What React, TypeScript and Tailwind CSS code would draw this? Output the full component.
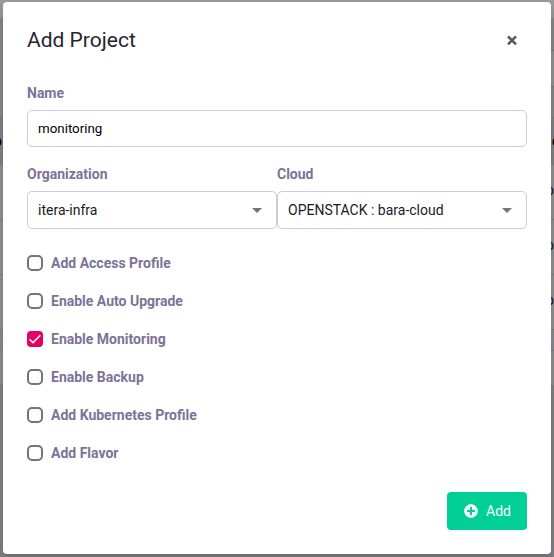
import React from "react";
import { FaPlusCircle } from "react-icons/fa";

const options = [
  { label: "Add Access Profile", checked: false },
  { label: "Enable Auto Upgrade", checked: false },
  { label: "Enable Monitoring", checked: true },
  { label: "Enable Backup", checked: false },
  { label: "Add Kubernetes Profile", checked: false },
  { label: "Add Flavor", checked: false },
];

const tableRows = ["h-[55px]", "h-[55px]", "h-[55px]"];

function Backdrop() {
  return (
    <div className="flex h-full flex-col overflow-hidden bg-[#858488] text-[14px]">
      <div className="h-[19px] shrink-0 border-b border-[#86868c] bg-[#9b9b9b]" />
      <div className="flex h-[99px] shrink-0 justify-between border-b border-[#7d7d83]">
        <div className="w-1 bg-[#88888c]" />
        <div className="w-1">
          <div className="h-8 border-b border-[#77777c] bg-[#88888c]" />
          <div className="h-9 border-b border-[#77777c] bg-[#929292]" />
          <div className="h-[30px] bg-[#88888c]" />
        </div>
      </div>
      <div className="flex h-[47px] shrink-0 items-center justify-between bg-[#828286] font-bold text-[#0c0a16]">
        <span className="-ml-[6px]">o</span>
        <span className="-mr-[6px]">o</span>
      </div>
      {tableRows.map((height, i) => (
        <div key={i} className={`${height} flex shrink-0 items-center justify-end border-b border-[#7e7e80] bg-[#919191] pb-[3px] text-[#17141f]`}>
          <span>o</span>
        </div>
      ))}
      <div className="h-[21px] shrink-0 border-b border-[#7d7d80] bg-[#8b8b91]" />
      <div className="h-[34px] shrink-0 bg-[#8f8f8f]" />
      <div className="flex-1 bg-[#828286]" />
    </div>
  );
}

function Select({ label, value }: { label: string; value: string }) {
  return (
    <div className="flex-1">
      <div className="text-[14px] leading-[22px] font-bold text-[#7b7398]">{label}</div>
      <div className="mt-[6px] flex h-[38px] items-center justify-between rounded-[5px] border border-[#cdcada] pr-[14px] pl-[10px] text-[14px] text-[#1c1a20]">
        <span>{value}</span>
        <svg width="10" height="5" viewBox="0 0 10 5" fill="#757575">
          <path d="M0 0H10L5 5Z" />
        </svg>
      </div>
    </div>
  );
}

function Checkbox({ checked }: { checked: boolean }) {
  return checked ? (
    <span className="flex size-4 items-center justify-center rounded-[4px] bg-[#e60063]">
      <svg width="16" height="16" viewBox="0 0 16 16" fill="none" stroke="white" strokeWidth="1.5">
        <path d="M2.5 8.3L6 11.6L13.4 4.2" />
      </svg>
    </span>
  ) : (
    <span className="size-4 rounded-[5px] border-2 border-[#757575]" />
  );
}

export default function App() {
  return (
    <div className="relative h-[557px] w-[554px] overflow-hidden font-['Roboto',sans-serif]">
      <Backdrop />
      <div className="absolute top-[2px] left-[3px] flex h-[552px] w-[548px] flex-col rounded-[4px] bg-white px-6 pb-6 shadow-[0_4px_10px_rgba(0,0,0,0.2)]">
        <header className="flex h-[76px] items-center justify-between pr-[9px]">
          <h1 className="text-[21px] leading-[28px] text-[#28242e]">Add Project</h1>
          <svg width="12" height="12" viewBox="0 0 12 12" stroke="#5c5a58" strokeWidth="2.6">
            <path d="M2 2.3L10 10.3M10 2.3L2 10.3" />
          </svg>
        </header>
        <div className="pt-[4px]">
          <div className="text-[14px] leading-[22px] font-bold text-[#7b7398]">Name</div>
          <div className="mt-[6px] flex h-[37px] items-center rounded-[5px] border border-[#cdcada] px-[10px] text-[13.333px] text-black">
            monitoring
          </div>
        </div>
        <div className="mt-4 flex">
          <Select label="Organization" value="itera-infra" />
          <Select label="Cloud" value="OPENSTACK : bara-cloud" />
        </div>
        <div className="mt-[15px]">
          {options.map((option) => (
            <label key={option.label} className="flex h-[38px] items-center gap-2 text-[14px] font-bold text-[#7b7398]">
              <Checkbox checked={option.checked} />
              {option.label}
            </label>
          ))}
        </div>
        <button className="mt-auto flex h-[38px] w-20 items-center justify-center gap-2 self-end rounded-[4px] bg-[#00d095] pl-px text-[14px] text-white">
          <FaPlusCircle size={14} />
          Add
        </button>
      </div>
    </div>
  );
}
